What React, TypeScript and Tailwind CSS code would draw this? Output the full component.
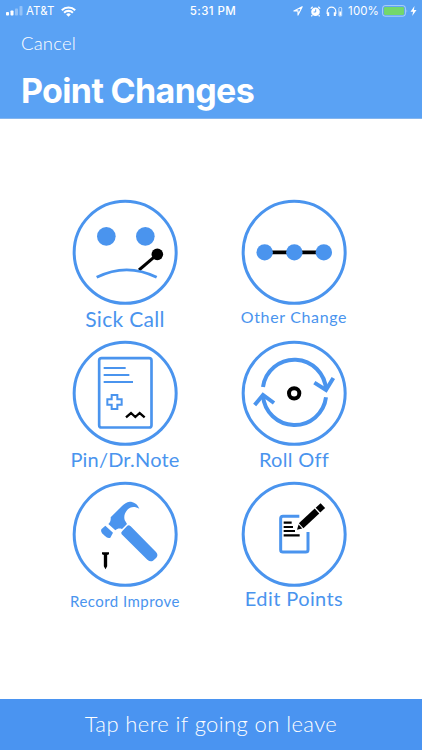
import type { ReactNode } from "react";

interface Action {
  title: string;
  labelClass: string;
  icon: ReactNode;
}

const BLUE = "#4a94ee";

const SickIcon = () => (
  <>
    <circle cx="103" cy="112" r="28" fill={BLUE} />
    <circle cx="220" cy="112" r="28" fill={BLUE} />
    <path d="M201 213 256 166" stroke="#000" strokeWidth="9" />
    <circle cx="256" cy="166" r="17.5" fill="#000" />
    <path d="M74 235Q164 190 254 235" stroke={BLUE} strokeWidth="8.5" />
  </>
);

const OtherIcon = () => (
  <>
    <path d="M70 160H247" stroke="#000" strokeWidth="11" />
    <circle cx="71" cy="160" r="24.5" fill={BLUE} />
    <circle cx="160" cy="160" r="24.5" fill={BLUE} />
    <circle cx="248.5" cy="160" r="24.5" fill={BLUE} />
  </>
);

const NoteIcon = () => (
  <>
    <rect x="81.5" y="54.5" width="157" height="208" rx="7" stroke={BLUE} strokeWidth="8" />
    <path d="M95 84H161M95 105H172M95 126H183" stroke={BLUE} strokeWidth="6" />
    <path
      d="M119 165H136V178H149V194H136V207H119V194H106V178H119Z"
      stroke={BLUE}
      strokeWidth="6"
    />
    <path d="M162 232 177 219 190 231 203 219 218 232" stroke="#000" strokeWidth="7" />
  </>
);

const RollIcon = () => (
  <>
    <g stroke={BLUE} strokeWidth="12">
      <path d="M66 141A95 95 0 0 1 255 150" />
      <path d="M255 172A95 95 0 0 1 66 167" />
      <path d="M220 128 255 150 277 114" />
      <path d="M41 195 66 165 99 189" />
    </g>
    <circle cx="159.5" cy="160" r="15.5" stroke="#000" strokeWidth="12" />
  </>
);

const HammerIcon = () => (
  <>
    <g fill={BLUE}>
      <path d="M202 83C196 68 185 62 173 62C164 63 157 68 150 75L116 109C117 118 114 124 109 129L130 148C136 142 143 142 150 144L165 129L158 117C155 106 158 97 164 89C173 77 187 75 202 83Z" />
      <path d="M100 134 123 155 115 170Q107 173 99 165L90 157Q85 151 88 145Z" />
      <path d="M151 150 166 134Q171 131 176 136L252 213Q260 222 253 230L243 239Q235 244 226 236L149 160Q145 155 151 150Z" />
    </g>
    <path d="M90 214H111V220L105.500 222V256L100.500 265L95.500 256V222L90 220Z" fill="#000" />
  </>
);

const EditIcon = () => (
  <>
    <path
      d="M175 106H126Q119 106 119 113V206Q119 213 126 213H194Q201 213 201 206V153"
      stroke={BLUE}
      strokeWidth="9"
    />
    <path d="M128 125H152M128 138H156M128 150H162M128 163H176" stroke="#000" strokeWidth="6.5" />
    <g fill="#000" transform="translate(168 146) rotate(-43)">
      <path d="M0 0 14-8V8Z" />
      <path d="M17-10H82V10H17Z" />
      <path d="M86-10H106V10H86Z" />
    </g>
  </>
);

const actions: Action[] = [
  { title: "Sick Call", labelClass: "mt-0.5 text-[21px] tracking-[0.3px]", icon: <SickIcon /> },
  { title: "Other Change", labelClass: "text-[16px] tracking-[0.65px]", icon: <OtherIcon /> },
  { title: "Pin/Dr.Note", labelClass: "mt-0.5 text-[20px] tracking-[0.2px]", icon: <NoteIcon /> },
  { title: "Roll Off", labelClass: "mt-0.5 text-[20px] tracking-[0.3px]", icon: <RollIcon /> },
  { title: "Record Improve", labelClass: "mt-[3px] text-[15px] tracking-[0.45px]", icon: <HammerIcon /> },
  { title: "Edit Points", labelClass: "text-[20px] tracking-[0.4px]", icon: <EditIcon /> },
];

const StatusBar = () => (
  <div className="grid h-[22px] grid-cols-[1fr_auto_1fr] items-center pr-[5px] pl-1.5 font-[Inter,sans-serif] text-[11.5px] leading-none">
    <div className="flex items-center">
      <svg width="17" height="10" viewBox="0 0 17 10" fill="#fff">
        <rect x="0" y="6" width="3" height="3.5" rx=".8" />
        <rect x="4.5" y="4.5" width="3" height="5" rx=".8" />
        <rect x="9" y="2.5" width="3" height="7" rx=".8" opacity=".35" />
        <rect x="13.5" y="0" width="3" height="9.5" rx=".8" opacity=".35" />
      </svg>
      <span className="mt-0.5 ml-[3px] tracking-[0.1px]">AT&amp;T</span>
      <svg className="ml-1.5" width="15" height="11" viewBox="0 0 15 11" fill="none" stroke="#fff" strokeWidth="2.1">
        <path d="M.8 4.2a9.6 9.6 0 0 1 13.4 0M3.1 6.7a6.3 6.3 0 0 1 8.8 0" />
        <path d="M5.2 8.4a3.3 3.3 0 0 1 4.6 0L7.5 10.7Z" fill="#fff" stroke="none" />
      </svg>
    </div>
    <span className="mt-0.5 pl-[3px] font-medium tracking-[0.4px]">5:31 PM</span>
    <div className="flex items-center justify-end">
      <svg width="10" height="10" viewBox="0 0 10 10" fill="none" stroke="#fff" strokeWidth="1.1">
        <path d="M9.2.8.9 4.9H5V9.1Z" strokeLinejoin="round" />
      </svg>
      <svg className="ml-[7px]" width="11" height="11" viewBox="0 0 11 11" fill="none">
        <circle cx="5.5" cy="5.8" r="4.3" fill="#fff" />
        <path d="M.8 2.6 2.7.8M10.2 2.6 8.3.8M2.3 9.2 1.4 10.4M8.7 9.2 9.6 10.4" stroke="#fff" strokeWidth="1.3" />
        <path d="M5.7 3.3V6H3.6" stroke="#5aa2f4" />
      </svg>
      <svg className="ml-[5px]" width="17" height="11" viewBox="0 0 17 11" fill="none" stroke="#fff">
        <path d="M1.2 8V5.5a4.3 4.3 0 0 1 8.6 0V8" strokeWidth="1.2" />
        <path d="M2.2 6.3V10M8.8 6.3V10" strokeWidth="2" />
        <rect x="12.9" y="1.5" width="2.8" height="8.5" rx=".5" strokeWidth=".8" opacity=".8" />
        <path d="M14.3 5.5V9.5" strokeWidth="1.8" />
      </svg>
      <span className="mt-0.5 ml-[5px] tracking-[0.1px]">100%</span>
      <svg className="ml-[3px]" width="26" height="12" viewBox="0 0 26 12">
        <rect x=".6" y=".6" width="22.8" height="10.6" rx="2.5" fill="none" stroke="#fff" strokeOpacity=".5" />
        <rect x="1.9" y="1.9" width="20.2" height="8" rx="1.3" fill="#73d76c" />
        <path d="M24.6 4.2q1.3 1.7 0 3.5Z" fill="#fff" opacity=".5" />
      </svg>
      <svg className="ml-0.5" width="7" height="10" viewBox="0 0 6 10" fill="#fff">
        <path d="M4 0 0 5.7H2.6L1.7 10 6 4H3.4Z" />
      </svg>
    </div>
  </div>
);

const ActionButton = ({ title, labelClass, icon }: Action) => (
  <button type="button" className="flex h-[141px] flex-col items-center">
    <svg className="shrink-0" width="106" height="106" viewBox="0 0 318 318" fill="none">
      <circle cx="159.5" cy="160" r="153" stroke={BLUE} strokeWidth="9" />
      {icon}
    </svg>
    <span className={`leading-[23px] whitespace-nowrap ${labelClass}`}>{title}</span>
  </button>
);

const App = () => {
  return (
    <div className="flex h-[750px] w-[422px] flex-col overflow-hidden bg-white font-[Lato,sans-serif] text-[#4a94ee]">
      <header className="h-[119px] shrink-0 border-b border-[#85b6ee] bg-[#5aa2f4] text-white">
        <StatusBar />
        <div className="flex flex-col items-start pl-[21px]">
          <button type="button" className="mt-[9px] text-[18.5px] leading-6 font-light tracking-[0.2px]">
            Cancel
          </button>
          <h1 className="mt-4 font-[Inter,sans-serif] text-[34px] leading-10 font-bold tracking-[-0.65px]">
            Point Changes
          </h1>
        </div>
      </header>

      <main className="grid grow grid-cols-[170px_168px] content-start pt-20 pl-10">
        {actions.map((action) => (
          <ActionButton key={action.title} {...action} />
        ))}
      </main>

      <button
        type="button"
        className="h-[51px] shrink-0 bg-[#4a94f1] pb-0.5 text-[22px] font-light tracking-[0.4px] text-white"
      >
        Tap here if going on leave
      </button>
    </div>
  );
};

export default App;
